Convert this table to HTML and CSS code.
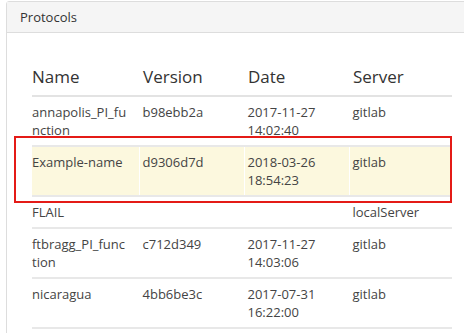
FILE: index.html
```html
<!DOCTYPE html>
<html lang="en">
<head>
  <meta charset="UTF-8" />
  <title>Protocols</title>
  <meta name="viewport" content="width=device-width, initial-scale=1" />
  <link rel="stylesheet" href="styles.css">
</head>
<body>
  <div class="panel">
    <div class="panel-heading">Protocols</div>
    <div class="panel-body">
      <table class="protocols">
        <colgroup>
          <col class="c-name"><col class="c-version"><col class="c-date"><col class="c-server">
        </colgroup>
        <thead>
          <tr><th>Name</th><th>Version</th><th>Date</th><th>Server</th></tr>
        </thead>
        <tbody>
          <tr><td>annapolis_PI_function</td><td>b98ebb2a</td><td>2017-11-27 14:02:40</td><td>gitlab</td></tr>
          <tr class="warning"><td>Example-name</td><td>d9306d7d</td><td>2018-03-26 18:54:23</td><td>gitlab</td></tr>
          <tr><td>FLAIL</td><td></td><td></td><td>localServer</td></tr>
          <tr><td>ftbragg_PI_function</td><td>c712d349</td><td>2017-11-27 14:03:06</td><td>gitlab</td></tr>
          <tr><td>nicaragua</td><td>4bb6be3c</td><td>2017-07-31 16:22:00</td><td>gitlab</td></tr>
        </tbody>
      </table>
    </div>
  </div>
  <!-- annotation box around the highlighted row -->
  <div class="callout"></div>
</body>
</html>
```

FILE: styles.css
```css
html, body {
  margin: 0;
  padding: 0;
  overflow: hidden;
}
body {
  font-family: 'Open Sans', sans-serif;
  font-size: 13px;
  background: #fff;
  color: #444;
  width: 464px;
  height: 333px;
  position: relative;
}
.panel {
  margin: 1px 0 0 6px;
  width: 480px;
  border: 1px solid #ddd;
  border-radius: 3px;
}
.panel-heading {
  background: #f5f5f5;
  border-bottom: 1px solid #ddd;
  color: #333;
  padding: 6px 13px;
  line-height: 18px;
}
.panel-body {
  padding: 26px 25px 24px;
}
.protocols {
  width: 420px;
  border-collapse: collapse;
  table-layout: fixed;
}
.c-name { width: 107px; }
.c-version { width: 105px; }
.c-date { width: 105px; }
.c-server { width: 103px; }
.protocols th {
  font-size: 17px;
  font-weight: normal;
  color: #333;
  text-align: left;
  line-height: 24px;
  padding: 6px 5px 6px 4px;
  border-bottom: 2px solid #e3e3e3;
}
.protocols td {
  line-height: 18px;
  padding: 6px 6px 6px 3px;
  vertical-align: top;
  border-top: 2px solid #e8e8e8;
  border-left: 1px solid #fff;
  overflow-wrap: anywhere;
}
.protocols th:first-child,
.protocols td:first-child {
  padding-left: 0;
  border-left: none;
}
.protocols td:first-child {
  padding-right: 10px;
}
.protocols tbody tr:last-child td {
  border-bottom: 2px solid #e8e8e8;
}
.protocols tr.warning td {
  background: #fcf8de;
}
.callout {
  position: absolute;
  left: 14px;
  top: 136px;
  width: 434px;
  height: 63px;
  border: 2px solid #e41b17;
}
```
